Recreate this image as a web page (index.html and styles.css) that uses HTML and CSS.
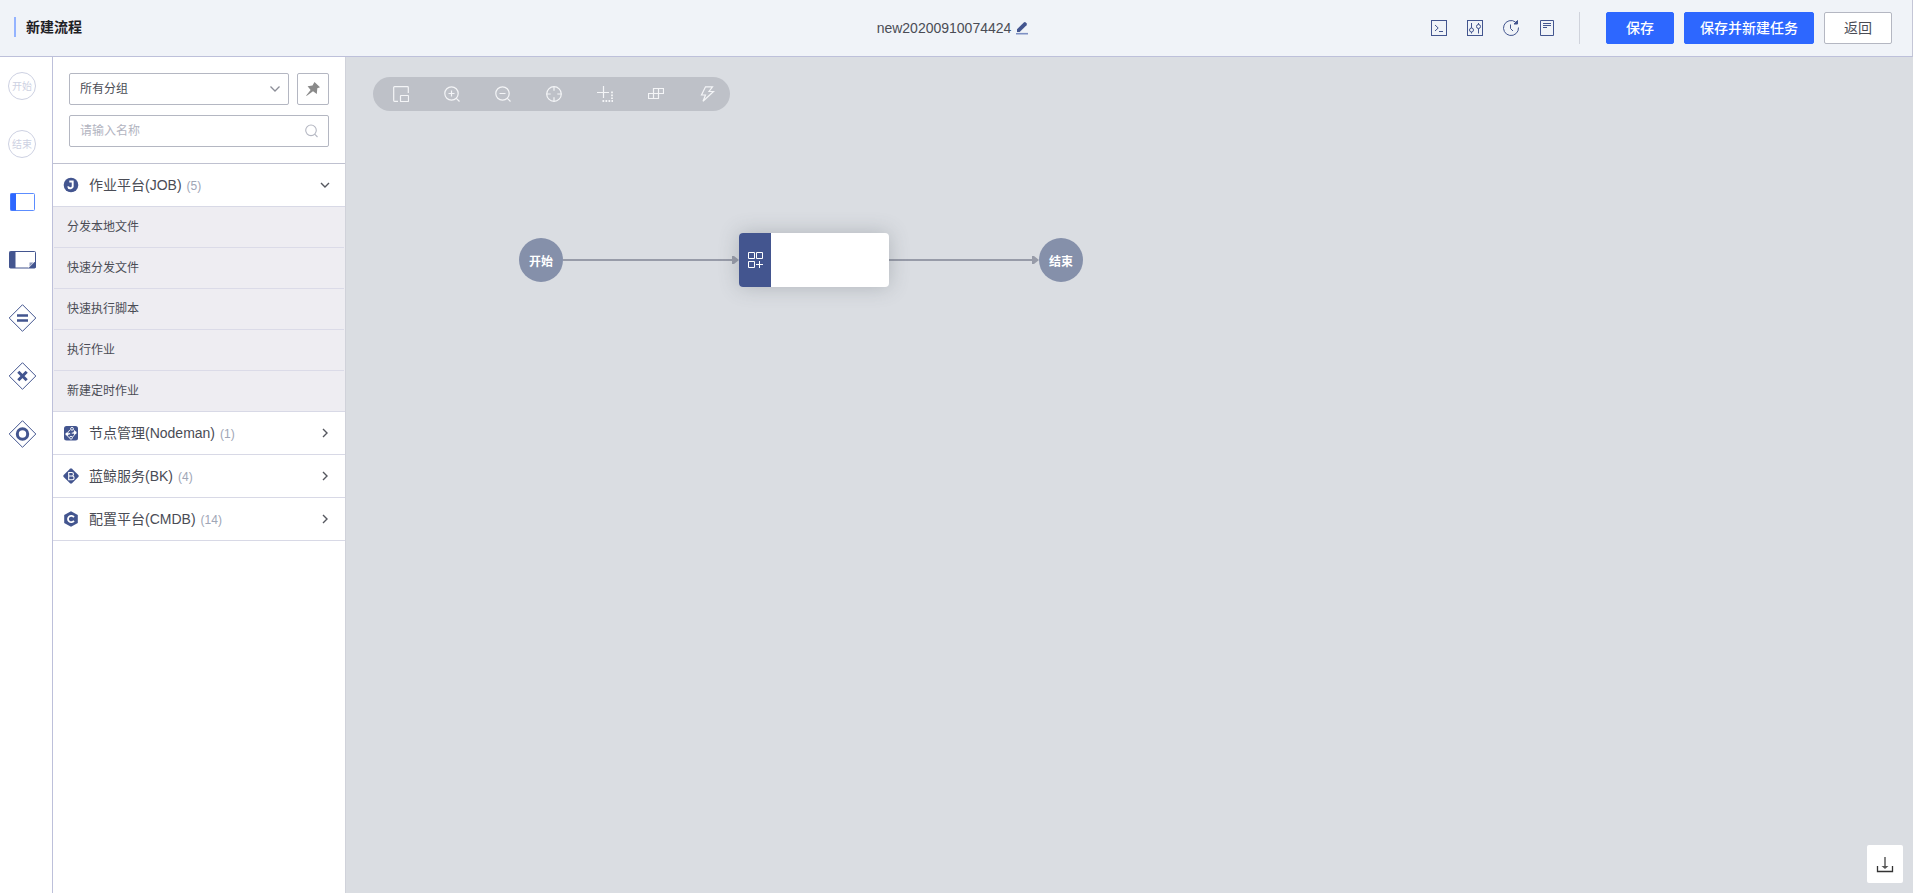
FILE: index.html
```html
<!DOCTYPE html>
<html lang="zh-CN">
<head>
<meta charset="utf-8">
<title>新建流程</title>
<link rel="stylesheet" href="styles.css">
</head>
<body>
<div class="page">
  <header class="topbar">
    <h1 class="topbar-title">新建流程</h1>
    <div class="flow-name">
      <span>new20200910074424</span>
      <button class="icon-btn" aria-label="编辑名称">
        <svg width="14" height="14" viewBox="0 0 14 14"><path d="M2 11V8.300L8.800 1.500Q9.800.7 10.800 1.500L11.500 2.200Q12.300 3.200 11.500 4.200L4.700 11z" fill="#43558f"/><path d="M1 12.700h12" stroke="#7e90c4" stroke-width="1.600"/></svg>
      </button>
    </div>
    <div class="topbar-actions">
      <div class="tools">
        <button class="icon-btn" aria-label="全局变量"><svg width="16" height="16" viewBox="0 0 16 16" class="line"><rect x=".5" y=".5" width="15" height="15"/><path d="M4 5l3.200 3L4 11M8 11.500h4"/></svg></button>
        <button class="icon-btn" aria-label="基础信息"><svg width="16" height="16" viewBox="0 0 16 16" class="line"><rect x=".5" y=".5" width="15" height="15"/><path d="M4.500 3v5M4.500 12v1.500M11.500 3v1.500M11.500 8.500V13.500"/><circle cx="4.500" cy="10" r="2"/><circle cx="11.500" cy="6.500" r="2"/></svg></button>
        <button class="icon-btn" aria-label="本地缓存"><svg width="16" height="16" viewBox="0 0 16 16" class="line"><path d="M12.500 2A7.500 7.500 0 1 0 15.500 7.500M7.500 4.500v4l2.500 2.500"/><path d="M14.500.5v3.500h-3.500z" fill="#43558f"/></svg></button>
        <button class="icon-btn" aria-label="模板数据"><svg width="16" height="16" viewBox="0 0 16 16" class="line"><path d="M1.500.5h13v15h-13zM4 3.500h8M4 5.500h8M4 7.500h4"/></svg></button>
      </div>
      <button class="btn btn-primary">保存</button>
      <button class="btn btn-primary btn-wide">保存并新建任务</button>
      <button class="btn">返回</button>
    </div>
  </header>

  <main class="workspace">
    <nav class="rail" aria-label="节点">
      <button class="rail-item"><span class="rail-circle">开始</span></button>
      <button class="rail-item"><span class="rail-circle">结束</span></button>
      <button class="rail-item" aria-label="标准插件"><svg width="28" height="28" viewBox="0 0 28 28"><rect x="2.500" y="5.500" width="24" height="17" rx="1" fill="none" stroke="#5c8dff"/><path d="M2.500 5.500h5.500v17H2.500z" fill="#2d67ff"/></svg></button>
      <button class="rail-item" aria-label="子流程"><svg width="28" height="28" viewBox="0 0 28 28"><rect x="1.500" y="5.500" width="26" height="16.500" rx="1" fill="none" stroke="#43558f"/><path d="M1.500 5.500h6v16.500h-6zM21 22v-6h6.500V22z" fill="#43558f"/><path d="M20.500 15.500h6.500l-6.500 6.500z" fill="#fff"/><path d="M21.500 20.500v-4h4z" fill="#8c98bd"/></svg></button>
      <button class="rail-item" aria-label="并行网关"><svg width="28" height="28" viewBox="0 0 28 28"><path class="diamond" d="M14.500.7 27.800 14 14.500 27.300 1.200 14z"/><path d="M9 11.500h11M9 16.500h11" stroke="#43558f" stroke-width="2.500"/></svg></button>
      <button class="rail-item" aria-label="分支网关"><svg width="28" height="28" viewBox="0 0 28 28"><path class="diamond" d="M14.500.7 27.800 14 14.500 27.300 1.200 14z"/><path d="M10.300 9.800l8.400 8.400M18.700 9.800l-8.400 8.400" stroke="#43558f" stroke-width="3"/></svg></button>
      <button class="rail-item" aria-label="汇聚网关"><svg width="28" height="28" viewBox="0 0 28 28"><path class="diamond" d="M14.500.7 27.800 14 14.500 27.300 1.200 14z"/><circle cx="14.500" cy="14" r="5.200" fill="none" stroke="#43558f" stroke-width="3"/></svg></button>
    </nav>

    <aside class="panel">
      <div class="filters">
        <div class="filter-row">
          <div class="field">
            <select class="control" aria-label="分组"><option>所有分组</option></select>
            <svg class="field-icon" width="12" height="12" viewBox="0 0 12 12"><path d="M1.500 3.500 6 8l4.500-4.500" fill="none" stroke="#8b8d97" stroke-width="1.300"/></svg>
          </div>
          <button class="pin" aria-label="固定"><svg width="16" height="16" viewBox="0 0 16 16"><path d="M9.500 1 15 6.200 12.300 7.200 11.800 13 8 10.200 1.500 15 1.200 14.500 5.600 9 2.600 5.200 7.500 4.500z" fill="#8a8a8a"/></svg></button>
        </div>
        <div class="field">
          <input class="control" type="text" placeholder="请输入名称" aria-label="名称">
          <svg class="field-icon" width="14" height="14" viewBox="0 0 14 14" fill="none" stroke="#b4b7c2" stroke-width="1.100"><circle cx="6" cy="6.300" r="5.300"/><path d="M9.900 10.300l2.600 2.700"/></svg>
        </div>
      </div>
      <section>
        <button class="group">
          <svg width="16" height="16" viewBox="0 0 16 16"><circle cx="8" cy="8" r="7.300" fill="#43558f"/><path d="M6.300 4.500h3.400V8.500a2.300 2.300 0 0 1-4.600.8" fill="none" stroke="#fff" stroke-width="1.900"/></svg>
          <span class="group-name">作业平台(JOB)<small>(5)</small></span>
          <svg class="arrow" width="10" height="10" viewBox="0 0 10 10"><path d="M1 3l4 4 4-4"/></svg>
        </button>
        <ul class="items">
          <li>分发本地文件</li>
          <li>快速分发文件</li>
          <li>快速执行脚本</li>
          <li>执行作业</li>
          <li>新建定时作业</li>
        </ul>
      </section>
      <button class="group">
        <svg width="16" height="16" viewBox="0 0 16 16"><rect x="1" y="1" width="14" height="14.500" rx="2.500" fill="#43558f"/><g fill="none" stroke="#fff" stroke-width=".9"><circle cx="9" cy="3.800" r="1.400"/><circle cx="8" cy="12.700" r="1.400"/><path d="M11.500 7.500Q12 5.500 10.500 4.500M4.500 8.500Q5 6 7.300 5M9.300 12Q11.500 11 12 8.500M4 9.500Q4 11.500 6.200 12.500"/></g><path d="M4 9.200 12 7.700" stroke="#fff" stroke-width="1.100" stroke-dasharray="3.200 1.600"/><circle cx="4" cy="9" r="1.600" fill="#fff"/><circle cx="12" cy="7.700" r="1.600" fill="#fff"/></svg>
        <span class="group-name">节点管理(Nodeman)<small>(1)</small></span>
        <svg class="arrow" width="10" height="10" viewBox="0 0 10 10"><path d="M3 1l4 4-4 4"/></svg>
      </button>
      <button class="group">
        <svg width="16" height="16" viewBox="0 0 16 16"><path d="M7 .7Q8-.2 9 .7L15.300 7Q16.200 8 15.300 9L9 15.300Q8 16.200 7 15.300L.7 9Q-.2 8 .7 7z" fill="#43558f"/><path d="M5.700 4.500h3a1.700 1.700 0 0 1 0 3.500h-3zM5.700 8h3.500a1.900 1.900 0 0 1 0 3.800H5.700z" fill="none" stroke="#fff" stroke-width="1.100"/></svg>
        <span class="group-name">蓝鲸服务(BK)<small>(4)</small></span>
        <svg class="arrow" width="10" height="10" viewBox="0 0 10 10"><path d="M3 1l4 4-4 4"/></svg>
      </button>
      <button class="group">
        <svg width="16" height="16" viewBox="0 0 16 16"><path d="M8 .3 14.800 4.100v7.800L8 15.700 1.200 11.900V4.100z" fill="#43558f"/><path d="M10.900 6.300A3.200 3.200 0 1 0 10.900 9.700" fill="none" stroke="#fff" stroke-width="1.800"/></svg>
        <span class="group-name">配置平台(CMDB)<small>(14)</small></span>
        <svg class="arrow" width="10" height="10" viewBox="0 0 10 10"><path d="M3 1l4 4-4 4"/></svg>
      </button>
    </aside>

    <div class="canvas">
      <div class="canvas-tools">
        <button class="icon-btn" aria-label="缩略视图"><svg width="16" height="16" viewBox="0 0 16 16"><path d="M5 15.300H1.500a.8.8 0 0 1-.8-.8v-13a.8.8 0 0 1 .8-.8h13a.8.8 0 0 1 .8.8V7"/><rect x="7.500" y="9.500" width="8" height="6" rx=".5"/></svg></button>
        <button class="icon-btn" aria-label="放大"><svg width="16" height="16" viewBox="0 0 16 16"><circle cx="7.500" cy="7.500" r="6.700"/><path d="M12.300 12.300l3.200 3.200M4.500 7.500h6M7.500 4.500v6"/></svg></button>
        <button class="icon-btn" aria-label="缩小"><svg width="16" height="16" viewBox="0 0 16 16"><circle cx="7.500" cy="7.500" r="6.700"/><path d="M12.300 12.300l3.200 3.200M4.500 7.500h6"/></svg></button>
        <button class="icon-btn" aria-label="复位"><svg width="16" height="16" viewBox="0 0 16 16"><circle cx="8" cy="8" r="7.300"/><path d="M8 .7v4M8 11.300v4M.7 8h4M11.300 8h4"/></svg></button>
        <button class="icon-btn" aria-label="节点框选"><svg width="16" height="16" viewBox="0 0 16 16"><path d="M6.500 0v12M0 6.500h12"/><path d="M5.500 15H16M15 5.500V13" stroke-width="1.800" stroke-dasharray="1.700 1.300"/></svg></button>
        <button class="icon-btn" aria-label="自动排版"><svg width="16" height="16" viewBox="0 0 16 16"><path d="M5.500 2.500h10v5h-10zM.5 7.500h10v5H.5zM10.500 2.500v5M5.500 7.500v5"/></svg></button>
        <button class="icon-btn" aria-label="快捷键"><svg width="16" height="16" viewBox="0 0 16 16"><path d="M6.500.8h7L10 5.500h4.500L4 15.200 6.500 9H2.500z"/></svg></button>
      </div>

      <svg class="wires" width="800" height="300" viewBox="0 0 800 300" aria-hidden="true">
        <path d="M217 203h170M543 203h144" stroke="#979ba8" stroke-width="2"/>
        <path d="M386 199h2l5 4-5 4h-2zM686 199h2l5 4-5 4h-2z" fill="#979ba8"/>
      </svg>
      <div class="endpoint start">开始</div>
      <div class="task">
        <div class="task-icon"><svg width="16" height="16" viewBox="0 0 16 16"><path d="M1.500.5h6v6h-6zM9.500.5h6v6h-6zM1.500 9.500h6v6h-6zM12.500 9v7M9 12.500h7" fill="none" stroke="#fff"/></svg></div>
      </div>
      <div class="endpoint end">结束</div>

      <button class="download" aria-label="导出"><svg width="18" height="18" viewBox="0 0 18 18" fill="none"><path d="M1.500 11v5.500h15V11" stroke="#333" stroke-width="1.300"/><path d="M9 2v10.500" stroke="#777" stroke-width="1.800"/><path d="M5.500 11h7L9 14z" fill="#555"/></svg></button>
    </div>
  </main>
</div>
</body>
</html>
```
FILE: styles.css
```css
* { box-sizing: border-box; }

body {
  margin: 0;
  font-family: "Liberation Sans", "Noto Sans CJK SC", sans-serif;
  font-size: 12px;
  color: #4a4c55;
  background: #fff;
}

button, input, select { font: inherit; color: inherit; }
button { padding: 0; border: 0; background: none; cursor: pointer; }
svg { display: block; flex: none; }

.page {
  display: flex;
  flex-direction: column;
  height: 100vh;
  padding-bottom: 2px;
}

/* Header */
.topbar {
  display: grid;
  grid-template-columns: 1fr auto 1fr;
  align-items: center;
  padding: 12px 20px 12px 14px;
  border-right: 1px solid #c4c6d6;
  border-bottom: 1px solid #bdc0da;
  background: #f0f3f8;
}
.topbar-title {
  margin: 0 0 2px;
  padding-left: 10px;
  border-left: 2px solid #94b3ff;
  font-size: 14px;
  line-height: 20px;
  color: #1e2025;
}
.flow-name {
  display: flex;
  align-items: center;
  gap: 4px;
  font-size: 14px;
}
.topbar-actions {
  display: flex;
  justify-content: flex-end;
  gap: 10px;
}
.tools {
  display: flex;
  align-items: center;
  gap: 20px;
  margin-right: 16px;
  padding-right: 24px;
  border-right: 1px solid #d0d3dc;
}
.line { fill: none; stroke: #43558f; }
.btn {
  height: 32px;
  min-width: 68px;
  padding: 0 0 2px;
  border: 1px solid #b4b7c2;
  border-radius: 2px;
  background: #fff;
  font-size: 14px;
}
.btn-primary {
  border-color: #2d67ff;
  background: #2d67ff;
  font-weight: 500;
  color: #fff;
}
.btn-wide { padding: 0 15px 2px; }

/* Node rail */
.workspace {
  display: flex;
  flex: 1;
  min-height: 0;
}
.rail {
  display: flex;
  flex-direction: column;
  gap: 30px;
  flex: none;
  width: 53px;
  padding: 15px 8px;
  border-right: 1px solid #bdc0da;
}
.rail-item { width: 28px; height: 28px; }
.rail-circle {
  display: grid;
  place-items: center;
  height: 28px;
  padding-bottom: 2px;
  border: 1px solid #cdd1e2;
  border-radius: 50%;
  font-size: 10px;
  color: #cdd1e2;
}
.diamond { fill: none; stroke: #43558f; stroke-linejoin: round; }

/* Plugin list */
.panel {
  flex: none;
  width: 293px;
  border-right: 1px solid #d0d2da;
}
.filters {
  display: grid;
  gap: 10px;
  padding: 16px;
  border-bottom: 1px solid #bfc1d0;
}
.filter-row { display: flex; gap: 8px; }
.field { position: relative; flex: 1; }
.control {
  display: block;
  width: 100%;
  height: 32px;
  padding: 0 10px;
  border: 1px solid #b4b7c2;
  border-radius: 2px;
  background: #fff;
  appearance: none;
}
.control::placeholder { color: #b2b4bf; }
.field-icon {
  position: absolute;
  top: 0;
  right: 10px;
  bottom: 0;
  margin: auto 0;
  pointer-events: none;
}
select + .field-icon { right: 8px; }
.pin {
  display: grid;
  place-items: center;
  width: 32px;
  height: 32px;
  border: 1px solid #b4b7c2;
  border-radius: 2px;
}
.group {
  display: flex;
  align-items: center;
  gap: 10px;
  width: 100%;
  height: 43px;
  padding: 0 15px 0 10px;
  border-bottom: 1px solid #d8d9e6;
  text-align: left;
}
.group-name {
  flex: 1;
  padding-bottom: 2px;
  font-size: 14px;
}
.group-name small {
  margin-left: 5px;
  font-size: 12px;
  color: #a0a6b6;
}
.arrow { fill: none; stroke: #55575f; stroke-width: 1.4; }
.items {
  margin: 0;
  padding: 0;
  border-bottom: 1px solid #d8d9e6;
  list-style: none;
  background: #eeedf2;
}
.items li {
  margin: 0 1px;
  padding: 0 13px;
  border-bottom: 1px solid #dbdbe8;
  line-height: 40px;
}
.items li:last-child { border-bottom: 0; }

/* Canvas */
.canvas {
  position: relative;
  flex: 1;
  padding: 20px 27px;
  background: #dadde2;
}
.canvas-tools {
  display: inline-flex;
  align-items: center;
  gap: 35px;
  height: 34px;
  padding: 0 15px 0 20px;
  border-radius: 17px;
  background: #bec1c8;
}
.canvas-tools svg { fill: none; stroke: #f4f5f7; stroke-width: 1.2; }
.wires { position: absolute; top: 0; left: 0; }
.wires, .endpoint { pointer-events: none; }
.endpoint {
  position: absolute;
  top: 181px;
  display: grid;
  place-items: center;
  width: 44px;
  height: 44px;
  border-radius: 50%;
  background: #8590aa;
  font-weight: 700;
  color: #fff;
}
.start { left: 173px; }
.end { left: 693px; }
.task {
  position: absolute;
  top: 176px;
  left: 393px;
  display: flex;
  width: 150px;
  height: 54px;
  overflow: hidden;
  border-radius: 4px;
  background: #fff;
  box-shadow: 0 0 20px rgba(80, 90, 95, 0.3);
}
.task-icon {
  display: grid;
  place-items: center;
  width: 32px;
  background: #43558f;
}
.download {
  position: absolute;
  right: 10px;
  bottom: 10px;
  display: grid;
  place-items: center;
  width: 36px;
  height: 38px;
  border-radius: 2px;
  background: #fff;
}
```
